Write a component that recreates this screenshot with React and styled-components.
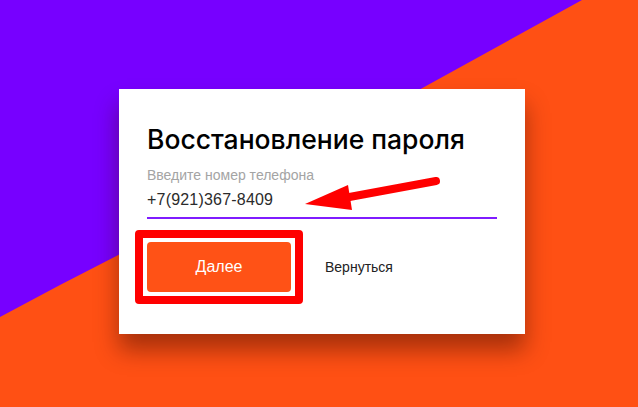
import styled, { createGlobalStyle } from "styled-components";

const GlobalStyle = createGlobalStyle`
    html, body {
        margin: 0;
        padding: 0;
    }
    body {
        font-family: "Liberation Sans", Arial, sans-serif;
        background: #ff5014;
    }
`;

const Page = styled.div`
    position: relative;
    width: 638px;
    height: 407px;
    overflow: hidden;
    background-color: #ff5014;
    display: flex;
    align-items: flex-start;
    padding: 89px 0 0 119px;
    box-sizing: border-box;

    .bg {
        position: absolute;
        top: 0;
        left: 0;
    }
`;

const Card = styled.div`
    position: relative;
    z-index: 1;
    width: 406px;
    height: 245px;
    box-sizing: border-box;
    background-color: #fff;
    padding: 35px 28px 0 28px;
    box-shadow: 0 16px 22px rgba(60, 10, 0, 0.45);
    display: flex;
    flex-direction: column;
`;

const Title = styled.h1`
    margin: 0;
    font-family: Inter, "Liberation Sans", sans-serif;
    font-size: 26.5px;
    line-height: 30px;
    font-weight: 500;
    color: #000;
    letter-spacing: 0;
`;

const Field = styled.div`
    margin-top: 13px;
    width: 350px;
    border-bottom: 2px solid #7f1cff;
    padding-bottom: 8px;

    .label {
        display: block;
        font-size: 14px;
        line-height: 16px;
        color: #a4a4a4;
    }

    .value {
        display: block;
        margin-top: 8px;
        font-size: 16px;
        line-height: 18px;
        color: #2b2b2b;
        letter-spacing: 0.2px;
    }
`;

const Actions = styled.div`
    margin-top: 11px;
    margin-left: -12px;
    display: flex;
    align-items: center;
    gap: 22px;
`;

const Highlight = styled.div`
    border: 8px solid #ff0000;
    border-radius: 4px;
    padding: 4px;
    background-color: #fff;
    display: flex;
`;

const PrimaryBtn = styled.button`
    width: 144px;
    height: 50px;
    border: none;
    border-radius: 4px;
    background-color: #ff5216;
    color: #fff;
    font-family: inherit;
    font-size: 16px;
    cursor: pointer;
`;

const LinkBtn = styled.button`
    border: none;
    background: none;
    padding: 0;
    font-family: inherit;
    font-size: 14px;
    color: #222;
    cursor: pointer;
`;

const Arrow = styled.svg`
    position: absolute;
    left: 180px;
    top: 84px;
    pointer-events: none;
`;

const App = () => {
    return (
        <>
            <GlobalStyle />
            <Page>
                <svg className="bg" width="638" height="407" viewBox="0 0 638 407">
                    <polygon points="0,0 582,0 130,249 60,285 0,317" fill="#7700ff" />
                </svg>
                <Card>
                    <Title>Восстановление пароля</Title>
                    <Field>
                        <span className="label">Введите номер телефона</span>
                        <span className="value">+7(921)367-8409</span>
                    </Field>
                    <Actions>
                        <Highlight>
                            <PrimaryBtn type="button">Далее</PrimaryBtn>
                        </Highlight>
                        <LinkBtn type="button">Вернуться</LinkBtn>
                    </Actions>
                    <Arrow width="150" height="40" viewBox="180 84 150 40">
                        <line x1="317" y1="92" x2="225" y2="109" stroke="#ff0000" strokeWidth="8" strokeLinecap="round" />
                        <polygon points="186,115 229,96 233,121" fill="#ff0000" />
                    </Arrow>
                </Card>
            </Page>
        </>
    );
};

export default App;
